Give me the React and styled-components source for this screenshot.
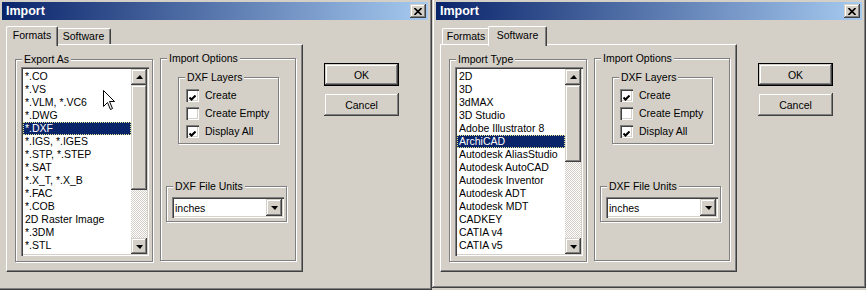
import React from "react"
import styled, { createGlobalStyle } from "styled-components"

const face = "#d4d0c8"
const raised = `inset -1px -1px #404040, inset 1px 1px ${face}, inset -2px -2px #808080, inset 2px 2px #fff`
const sunken = `inset 1px 1px #808080, inset 2px 2px #404040, inset -1px -1px #fff, inset -2px -2px ${face}`

const GlobalStyle = createGlobalStyle`
    html, body {
        margin: 0;
        padding: 0;
        background: ${face};
    }
    body {
        font-family: "Liberation Sans", Arial, sans-serif;
        font-size: 10.5px;
        color: #000;
    }
`

const Screen = styled.div`
    display: flex;
    align-items: flex-start;
    width: 866px;
    height: 290px;
    overflow: hidden;
`

const Window = styled.div`
    position: relative;
    flex: none;
    box-sizing: border-box;
    width: 434px;
    height: ${props => props.h}px;
    margin-top: -2px;
    margin-left: ${props => props.cropLeft ? -2 : 0}px;
    padding: 4px;
    background: ${face};
    box-shadow: inset -1px -1px #404040, inset 1px 1px ${face}, inset -2px -2px #808080, inset 2px 2px #fff;
    display: flex;
    flex-direction: column;
`

const TitleBar = styled.div`
    height: 18px;
    display: flex;
    align-items: center;
    justify-content: space-between;
    padding: 0 2px 0 4px;
    background: linear-gradient(to right, #0a246a, #a6caf0);
    color: #fff;
    font-weight: bold;
    font-size: 12.5px;
`

const CloseButton = styled.div`
    box-sizing: border-box;
    width: 16px;
    height: 14px;
    display: flex;
    align-items: center;
    justify-content: center;
    background: ${face};
    box-shadow: ${raised};
`

const Body = styled.div`
    display: flex;
    align-items: flex-start;
    padding: 6px 0 0 4px;
`

const TabControl = styled.div`
    width: 297px;
    display: flex;
    flex-direction: column;
`

const TabRow = styled.div`
    position: relative;
    z-index: 1;
    display: flex;
    align-items: flex-end;
    height: 18px;
    padding-left: 2px;
`

const Tab = styled.div`
    box-sizing: border-box;
    width: ${props => props.w + (props.active ? 4 : 0)}px;
    height: ${props => props.active ? 20 : 16}px;
    margin: 0 ${props => props.active ? -2 : 0}px ${props => props.active ? -2 : 0}px;
    padding-top: ${props => props.active ? 2 : 1}px;
    text-align: center;
    line-height: 13px;
    background: ${face};
    border-top: 1px solid #fff;
    border-left: 1px solid #fff;
    border-right: 1px solid #404040;
    border-radius: 2px 2px 0 0;
    box-shadow: inset -1px 0 #808080;
    position: relative;
    z-index: ${props => props.active ? 2 : 0};
`

const Panel = styled.div`
    box-sizing: border-box;
    height: 228px;
    border-top: 1px solid #fff;
    border-left: 1px solid #fff;
    border-right: 1px solid #404040;
    border-bottom: 1px solid #404040;
    box-shadow: inset -1px -1px #808080;
    display: flex;
    align-items: flex-start;
    padding-left: 8px;
`

const Group = styled.div`
    position: relative;
    flex: none;
    box-sizing: border-box;
    width: ${props => props.w}px;
    height: ${props => props.h}px;
    border: 1px solid #808080;
    box-shadow: inset 1px 1px #fff, 1px 1px #fff;
    display: flex;
    flex-direction: column;
    align-items: flex-start;
`

const GroupLabel = styled.span`
    position: absolute;
    top: -7px;
    left: 6px;
    padding: 0 2px;
    line-height: 13px;
    background: ${face};
    white-space: nowrap;
`

const ExportGroup = styled(Group)`
    margin-top: 14px;
`

const OptionsGroup = styled(Group)`
    margin: 13px 0 0 7px;
`

const LayersGroup = styled(Group)`
    margin: 18px 0 0 17px;
    padding: 11px 0 0 7px;
`

const UnitsGroup = styled(Group)`
    margin: 42px 0 0 5px;
`

const ListBox = styled.div`
    box-sizing: border-box;
    width: 128px;
    height: 189px;
    margin: 7px 0 0 5px;
    padding: 2px;
    background: #fff;
    box-shadow: ${sunken};
    display: flex;
`

const Items = styled.div`
    flex: 1;
    overflow: hidden;
    padding-top: 1px;
`

const Item = styled.div`
    height: 13px;
    line-height: 13px;
    padding-left: 2px;
    white-space: nowrap;
    background: ${props => props.selected ? "#0a246a" : "transparent"};
    color: ${props => props.selected ? "#fff" : "#000"};
    outline: ${props => props.selected ? "1px dotted #e8e890" : "none"};
    outline-offset: -1px;
`

const ScrollBar = styled.div`
    width: 16px;
    display: flex;
    flex-direction: column;
`

const ScrollButton = styled.div`
    box-sizing: border-box;
    width: 16px;
    height: 16px;
    flex: none;
    display: flex;
    align-items: center;
    justify-content: center;
    background: ${face};
    box-shadow: ${raised};
`

const Track = styled.div`
    flex: 1;
    background: repeating-conic-gradient(#fff 0 25%, ${face} 0 50%) 0 0 / 2px 2px;
`

const Thumb = styled.div`
    box-sizing: border-box;
    height: ${props => props.h}px;
    background: ${face};
    box-shadow: ${raised};
`

const Arrow = styled.div`
    width: 0;
    height: 0;
    border-left: 4px solid transparent;
    border-right: 3px solid transparent;
    ${props => props.down
        ? "border-top: 4px solid #000; margin-top: 1px;"
        : "border-bottom: 4px solid #000; margin-top: -1px;"}
`

const CheckRow = styled.div`
    display: flex;
    align-items: center;
    gap: 6px;
    height: 13px;
    margin-bottom: 5px;
    line-height: 13px;
    white-space: nowrap;
`

const CheckBox = styled.div`
    box-sizing: border-box;
    width: 13px;
    height: 13px;
    flex: none;
    padding: 3px 0 0 3px;
    background: #fff;
    box-shadow: ${sunken};
`

const Combo = styled.div`
    box-sizing: border-box;
    width: 112px;
    height: 21px;
    margin: 10px 0 0 5px;
    padding: 2px;
    background: #fff;
    box-shadow: ${sunken};
    display: flex;
    align-items: center;
`

const ComboText = styled.span`
    flex: 1;
    padding-left: 1px;
`

const DropButton = styled(ScrollButton)`
    height: 17px;
`

const Buttons = styled.div`
    display: flex;
    flex-direction: column;
    gap: 7px;
    margin: 37px 0 0 21px;
`

const Button = styled.div`
    box-sizing: border-box;
    width: 75px;
    height: 23px;
    display: flex;
    align-items: center;
    justify-content: center;
    background: ${face};
    border: ${props => props.primary ? "1px solid #000" : "none"};
    box-shadow: ${raised};
`

const Cursor = styled.svg`
    position: absolute;
    left: 105px;
    top: 92px;
`

const CloseIcon = () => (
    <svg width="8" height="7" viewBox="0 0 8 7">
        <path d="M0.5 0 L7.5 7 M7.5 0 L0.5 7" stroke="#000" strokeWidth="1.6" />
    </svg>
)

const CheckMark = () => (
    <svg width="7" height="7" viewBox="0 0 7 7">
        <path d="M0.5 2.5 L2.5 4.5 L6.5 0.5" stroke="#000" strokeWidth="2" fill="none" />
    </svg>
)

const formatItems = ["*.CO", "*.VS", "*.VLM, *.VC6", "*.DWG", "*.DXF", "*.IGS, *.IGES", "*.STP, *.STEP", "*.SAT",
    "*.X_T, *.X_B", "*.FAC", "*.COB", "2D Raster Image", "*.3DM", "*.STL", "*.AI"]

const softwareItems = ["2D", "3D", "3dMAX", "3D Studio", "Adobe Illustrator 8", "ArchiCAD", "Autodesk AliasStudio",
    "Autodesk AutoCAD", "Autodesk Inventor", "Autodesk ADT", "Autodesk MDT", "CADKEY", "CATIA v4", "CATIA v5", "Cobalt"]

const layers = [
    { label: "Create", checked: true },
    { label: "Create Empty", checked: false },
    { label: "Display All", checked: true },
]

const Dialog = ({ tab, listLabel, items, selected, thumb, h, cropLeft, children }) => (
    <Window h={h} cropLeft={cropLeft}>
        <TitleBar>
            <span>Import</span>
            <CloseButton><CloseIcon /></CloseButton>
        </TitleBar>
        <Body>
            <TabControl>
                <TabRow>
                    <Tab w={48} active={tab === "formats"}>Formats</Tab>
                    <Tab w={55} active={tab === "software"}>Software</Tab>
                </TabRow>
                <Panel>
                    <ExportGroup w={138} h={203}>
                        <GroupLabel>{listLabel}</GroupLabel>
                        <ListBox>
                            <Items>
                                {items.map((item, i) => (
                                    <Item key={item} selected={i === selected}>{item}</Item>
                                ))}
                            </Items>
                            <ScrollBar>
                                <ScrollButton><Arrow /></ScrollButton>
                                <Track><Thumb h={thumb} /></Track>
                                <ScrollButton><Arrow down /></ScrollButton>
                            </ScrollBar>
                        </ListBox>
                    </ExportGroup>
                    <OptionsGroup w={136} h={203}>
                        <GroupLabel>Import Options</GroupLabel>
                        <LayersGroup w={101} h={67}>
                            <GroupLabel>DXF Layers</GroupLabel>
                            {layers.map(l => (
                                <CheckRow key={l.label}>
                                    <CheckBox>{l.checked && <CheckMark />}</CheckBox>
                                    {l.label}
                                </CheckRow>
                            ))}
                        </LayersGroup>
                        <UnitsGroup w={121} h={36}>
                            <GroupLabel>DXF File Units</GroupLabel>
                            <Combo>
                                <ComboText>inches</ComboText>
                                <DropButton><Arrow down /></DropButton>
                            </Combo>
                        </UnitsGroup>
                    </OptionsGroup>
                </Panel>
            </TabControl>
            <Buttons>
                <Button primary>OK</Button>
                <Button>Cancel</Button>
            </Buttons>
        </Body>
        {children}
    </Window>
)

const App = () => (
    <Screen>
        <GlobalStyle />
        <Dialog tab="formats" listLabel="Export As" items={formatItems} selected={4} thumb={105} h={292} cropLeft>
            <Cursor width="13" height="21" viewBox="0 0 13 21">
                <path d="M0.5 0.5 L0.5 16.5 L4.5 12.5 L7.5 19.5 L9.5 18.5 L6.5 11.5 L11.5 11.5 Z"
                    fill="#fff" stroke="#000" strokeWidth="1" />
            </Cursor>
        </Dialog>
        <Dialog tab="software" listLabel="Import Type" items={softwareItems} selected={5} thumb={77} h={290} />
    </Screen>
)

export default App
